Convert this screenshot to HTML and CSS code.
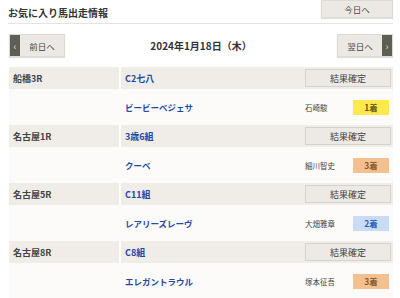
FILE: index.html
```html
<!DOCTYPE html>
<html lang="ja">
<head>
  <meta charset="UTF-8">
  <title>お気に入り馬出走情報</title>
  <link rel="stylesheet" href="styles.css">
</head>
<body>
  <div class="head">
    <div class="head-title">お気に入り馬出走情報</div>
    <a href="#" class="btn today">今日へ</a>
  </div>

  <div class="date-nav">
    <a href="#" class="btn pager prev"><span class="arrow">‹</span><span class="label">前日へ</span></a>
    <div class="date">2024年1月18日（木）</div>
    <a href="#" class="btn pager next"><span class="label">翌日へ</span><span class="arrow">›</span></a>
  </div>

  <div class="entries">
    <div class="race">
      <div class="race-name">船橋3R</div>
      <div class="race-class">C2七八</div>
      <div class="race-result"><a href="#" class="btn result">結果確定</a></div>
    </div>
    <div class="horse">
      <div class="horse-space"></div>
      <div class="horse-name">ビービーベジェサ</div>
      <div class="horse-result"><span class="jockey">石崎駿</span><span class="rank rank-1">1着</span></div>
    </div>

    <div class="race">
      <div class="race-name">名古屋1R</div>
      <div class="race-class">3歳6組</div>
      <div class="race-result"><a href="#" class="btn result">結果確定</a></div>
    </div>
    <div class="horse">
      <div class="horse-space"></div>
      <div class="horse-name">クーベ</div>
      <div class="horse-result"><span class="jockey">細川智史</span><span class="rank rank-3">3着</span></div>
    </div>

    <div class="race">
      <div class="race-name">名古屋5R</div>
      <div class="race-class">C11組</div>
      <div class="race-result"><a href="#" class="btn result">結果確定</a></div>
    </div>
    <div class="horse">
      <div class="horse-space"></div>
      <div class="horse-name">レアリーズレーヴ</div>
      <div class="horse-result"><span class="jockey">大畑雅章</span><span class="rank rank-2">2着</span></div>
    </div>

    <div class="race">
      <div class="race-name">名古屋8R</div>
      <div class="race-class">C8組</div>
      <div class="race-result"><a href="#" class="btn result">結果確定</a></div>
    </div>
    <div class="horse">
      <div class="horse-space"></div>
      <div class="horse-name">エレガントラウル</div>
      <div class="horse-result"><span class="jockey">塚本征吾</span><span class="rank rank-3">3着</span></div>
    </div>
  </div>
</body>
</html>
```

FILE: styles.css
```css
/* GENERAL */
body {
  margin: 0;
  padding: 0 7px 0 8px;
  background: #fff;
  color: #333;
  font-family: "Noto Sans CJK JP", "Noto Sans", sans-serif;
  font-size: 9px;
}

a {
  text-decoration: none;
}

.btn {
  display: flex;
  align-items: center;
  justify-content: center;
  background: #ece9e4;
  color: #444;
  border: 1px solid #dedbd5;
  box-shadow: 0 1px 1px rgba(0, 0, 0, 0.12);
  box-sizing: border-box;
}

/* HEADER */
.head {
  display: flex;
  justify-content: space-between;
  align-items: flex-start;
  height: 23px;
  border-bottom: 1px solid #e6e4e0;
}

.head-title {
  font-size: 10px;
  font-weight: bold;
  color: #333;
  margin-top: 5px;
}

.today {
  width: 72px;
  height: 18px;
  font-size: 8.5px;
}

/* DATE NAVIGATION */
.date-nav {
  display: flex;
  justify-content: space-between;
  align-items: center;
  margin-top: 10px;
  height: 23px;
}

.date {
  font-size: 10px;
  font-weight: bold;
  color: #333;
}

.pager {
  height: 23px;
  width: 56px;
  justify-content: flex-start;
}

.pager .arrow {
  width: 10px;
  height: 100%;
  background: #5f5e54;
  color: #d8d6cc;
  display: flex;
  align-items: center;
  justify-content: center;
  font-size: 10px;
}

.pager .label {
  flex: 1;
  text-align: center;
  font-size: 8.5px;
}

.prev {
  margin-left: 1px;
}

.next {
  margin-right: 0;
}

/* ENTRIES */
.entries {
  margin-top: 10px;
  margin-left: 1px;
}

.race {
  display: flex;
  align-items: center;
  height: 22px;
  background: #f0ede8;
}

.race-name {
  width: 106px;
  padding-left: 4px;
  align-self: stretch;
  display: flex;
  align-items: center;
  border-right: 2px solid #fff;
  font-weight: bold;
  color: #444;
}

.race-class {
  flex: 1;
  padding-left: 4px;
  font-weight: bold;
  color: #1e48a8;
}

.race-result {
  padding-right: 2px;
}

.result {
  width: 86px;
  height: 18px;
  background: #edeae5;
  box-shadow: none;
  border-color: #d6d3cd;
}

.horse {
  display: flex;
  align-items: center;
  height: 36px;
  background: #fcfbf9;
}

.horse-space {
  width: 112px;
}

.horse-name {
  flex: 1;
  padding-left: 4px;
  font-size: 8.5px;
  font-weight: bold;
  color: #2249a6;
}

.horse-result {
  display: flex;
  align-items: center;
  padding-right: 4px;
}

.jockey {
  width: 48px;
  font-size: 7.5px;
  color: #444;
}

.rank {
  width: 36px;
  height: 15px;
  display: flex;
  align-items: center;
  justify-content: center;
  font-weight: bold;
  font-size: 8.5px;
}

.rank-1 {
  background: #fde94f;
  color: #6b5a10;
}

.rank-2 {
  background: #c8dcf6;
  color: #2d5db4;
}

.rank-3 {
  background: #f3c190;
  color: #8a5a2a;
}
```
